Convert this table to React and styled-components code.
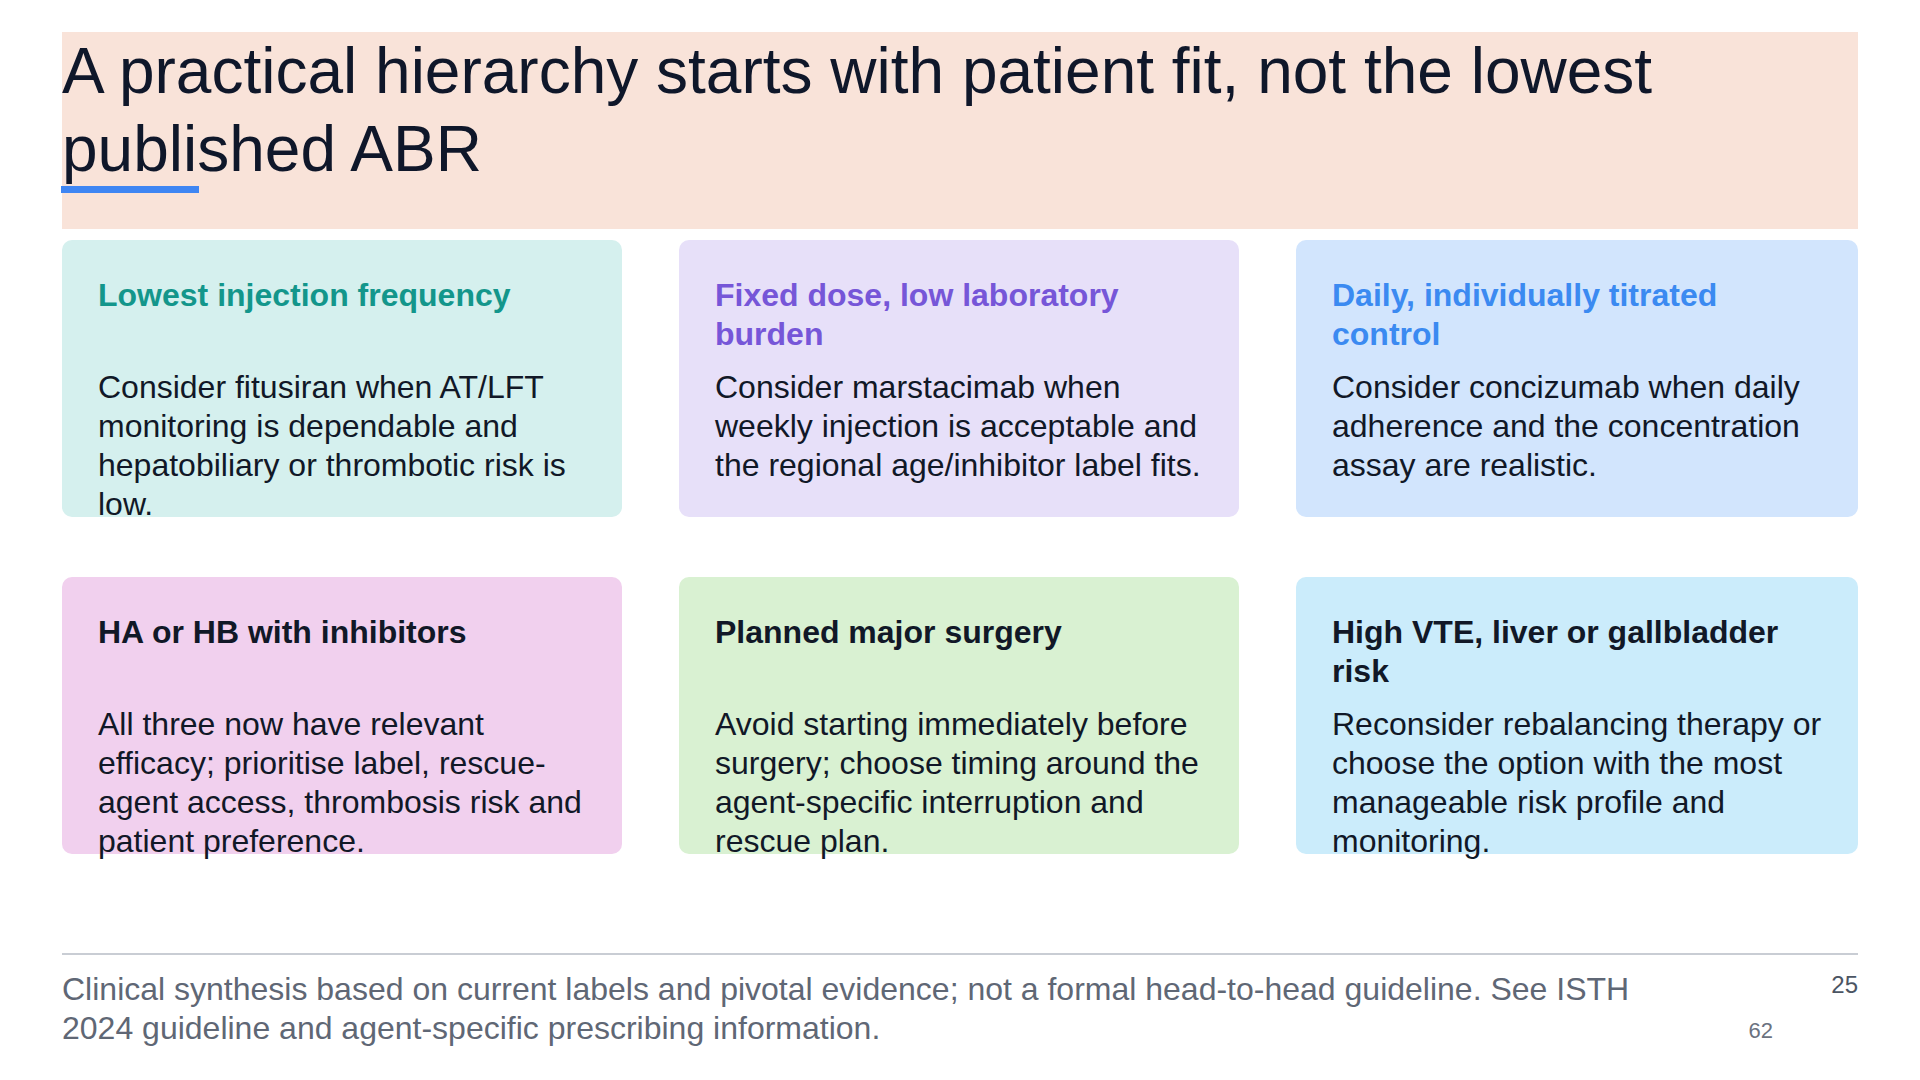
import styled, { createGlobalStyle } from 'styled-components'

const GlobalStyle = createGlobalStyle`
  html, body {
    margin: 0;
    padding: 0;
    background: #ffffff;
  }
  body {
    font-family: "Liberation Sans", Arial, Helvetica, sans-serif;
    color: #0f172a;
  }
  * {
    box-sizing: border-box;
  }
`

const Slide = styled.div`
  position: relative;
  width: 1920px;
  height: 1080px;
  padding: 32px 62px 0;
  display: flex;
  flex-direction: column;
  overflow: hidden;
`

const TitleBand = styled.header`
  background-color: #f9e3d9;
  padding-bottom: 36px;
  margin-bottom: 11px;
`

const Title = styled.h1`
  margin: 0;
  font-size: 64px;
  line-height: 1.22;
  font-weight: 400;
  color: #0f172a;
`

const AccentBar = styled.div`
  width: 138px;
  height: 7px;
  margin-top: -2px;
  margin-left: -1px;
  background-color: #3f86f3;
`

const CardGrid = styled.section`
  display: grid;
  grid-template-columns: 560px 560px 562px;
  grid-template-rows: 277px 277px;
  column-gap: 57px;
  row-gap: 60px;
`

const Card = styled.article`
  background-color: ${({ $bg }) => $bg};
  border-radius: 10px;
  padding: 36px 32px 36px 36px;
`

const CardHeading = styled.h3`
  margin: 0 0 13.5px;
  min-height: 78px;
  font-size: 32px;
  line-height: 1.22;
  font-weight: 700;
  color: ${({ $color }) => $color || '#111827'};
`

const CardText = styled.p`
  margin: 0;
  font-size: 32px;
  line-height: 1.22;
  color: #111827;
`

const Footer = styled.footer`
  margin-top: 99px;
  border-top: 2px solid #c9cdd4;
  padding-top: 15px;
  display: flex;
  justify-content: space-between;
  align-items: flex-start;
`

const FooterNote = styled.p`
  margin: 0;
  max-width: 1610px;
  font-size: 32px;
  line-height: 1.22;
  color: #5f6775;
`

const PageNumber = styled.span`
  font-size: 24px;
  line-height: 1.22;
  color: #4b5563;
`

const SlideCounter = styled.span`
  position: absolute;
  right: 147px;
  top: 1020px;
  font-size: 22px;
  line-height: 22px;
  color: #6b7280;
`

const cards = [
  {
    title: 'Lowest injection frequency',
    color: '#13968b',
    bg: '#d5f0ee',
    text: 'Consider fitusiran when AT/LFT monitoring is dependable and hepatobiliary or thrombotic risk is low.',
  },
  {
    title: 'Fixed dose, low laboratory burden',
    color: '#7656d8',
    bg: '#e7e0f9',
    text: 'Consider marstacimab when weekly injection is acceptable and the regional age/inhibitor label fits.',
  },
  {
    title: 'Daily, individually titrated control',
    color: '#3b8af1',
    bg: '#d2e5fd',
    text: 'Consider concizumab when daily adherence and the concentration assay are realistic.',
  },
  {
    title: 'HA or HB with inhibitors',
    bg: '#f1d0ee',
    text: 'All three now have relevant efficacy; prioritise label, rescue-agent access, thrombosis risk and patient preference.',
  },
  {
    title: 'Planned major surgery',
    bg: '#d9f1d2',
    text: 'Avoid starting immediately before surgery; choose timing around the agent-specific interruption and rescue plan.',
  },
  {
    title: 'High VTE, liver or gallbladder risk',
    bg: '#cbecfb',
    text: 'Reconsider rebalancing therapy or choose the option with the most manageable risk profile and monitoring.',
  },
]

const App = () => {
  return (
    <>
      <GlobalStyle />
      <Slide>
        <TitleBand>
          <Title>A practical hierarchy starts with patient fit, not the lowest published ABR</Title>
          <AccentBar />
        </TitleBand>

        <CardGrid>
          {cards.map((card) => (
            <Card key={card.title} $bg={card.bg}>
              <CardHeading $color={card.color}>{card.title}</CardHeading>
              <CardText>{card.text}</CardText>
            </Card>
          ))}
        </CardGrid>

        <Footer>
          <FooterNote>
            Clinical synthesis based on current labels and pivotal evidence; not a formal head-to-head guideline. See ISTH 2024 guideline and agent-specific prescribing information.
          </FooterNote>
          <PageNumber>25</PageNumber>
        </Footer>

        <SlideCounter>62</SlideCounter>
      </Slide>
    </>
  )
}

export default App
